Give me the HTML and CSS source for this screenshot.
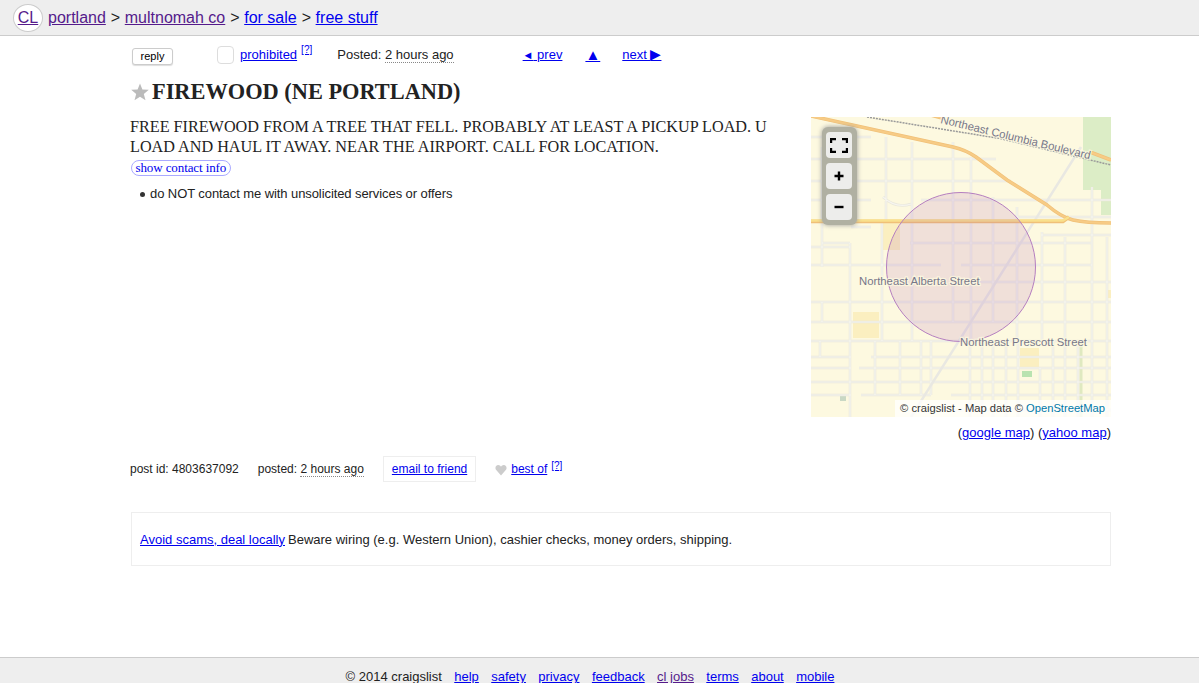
FILE: index.html
```html
<!DOCTYPE html>
<html lang="en">
<head>
<meta charset="utf-8">
<title>FIREWOOD (NE PORTLAND)</title>
<link rel="stylesheet" href="styles.css">
</head>
<body>
<header class="crumbs">
  <a class="cl-logo visited" href="#">CL</a>
  <a class="visited" href="#">portland</a><span class="sep">&gt;</span>
  <a class="visited" href="#">multnomah co</a><span class="sep">&gt;</span>
  <a href="#">for sale</a><span class="sep">&gt;</span>
  <a href="#">free stuff</a>
</header>
<main class="page">
  <div class="postingnav">
    <button class="reply" type="button">reply</button>
    <span class="flagbox"></span>
    <a class="prohibited" href="#">prohibited</a><sup class="help"><a href="#">[?]</a></sup>
    <span class="posted">Posted: <time class="ago">2 hours ago</time></span>
    <a class="nav-prev" href="#"><span class="tri-s">◄</span> prev</a>
    <a class="nav-up" href="#">▲</a>
    <a class="nav-next" href="#">next <span class="tri-l">▶</span></a>
  </div>
  <h1 class="title">
    <svg class="star" viewBox="0 0 18 18" width="18" height="18"><polygon points="9,0.5 11.4,6.4 17.8,6.8 12.8,10.9 14.5,17.2 9,13.7 3.5,17.2 5.2,10.9 0.2,6.8 6.6,6.4"/></svg>
    <span>FIREWOOD (NE PORTLAND)</span>
  </h1>
  <div class="posting">
    <section class="body">
      <p class="desc">FREE FIREWOOD FROM A TREE THAT FELL. PROBABLY AT LEAST A PICKUP LOAD. U LOAD AND HAUL IT AWAY. NEAR THE AIRPORT. CALL FOR LOCATION.</p>
      <a class="contact" href="#">show contact info</a>
      <ul class="notices"><li>do NOT contact me with unsolicited services or offers</li></ul>
    </section>
    <aside class="mapcol">
      <div class="map">
        <svg class="mapart" viewBox="0 0 300 300" width="300" height="300">
          <defs>
            <path id="streets" d="M0 20H60M0 42H185M0 64H200M0 83H60M72 80Q85 92 100 87M110 83H200M11 126H39M99 126H280M0 148H130M150 148H281M150 165H300M0 185H300M0 205H300M0 240H40M60 240H300M0 251H40M48 251H300M0 265H300M0 278H40M50 278H120M140 278H300M140 293H300M200 83H300M230 118H300M205 100H300M0 130H39M40 110H60M11 30V150M11 185V205M39 40V95M39 126V300M75 20V104M71 104V224M101 25V224M142 25V205M160 40V224M182 80V205M206 90V224M231 115V224M254 120V224M281 70V300M296 120V300M64 224V278M89 224V278M159 224V300M171 224V300M182 224V300M195 224V300M207 224V300M229 251V300M242 224V300M254 224V300M267 224V300M9 224V240M110 224V278M120 224V278M0 224H300"/>
          </defs>
          <rect class="land" width="300" height="300"/>
          <path class="park" d="M272 0H300V98H290V73H272Z"/>
          <path class="school" d="M71 106H89V133H71ZM42 195H68V221H42ZM209 231H228V251H209ZM296 173H300V181H296Z"/>
          <path class="green" d="M211 254H221V260H211Z"/>
          <path class="pale" d="M270 224V300"/>
          <path class="grey" d="M29 279H35V284H29Z"/>
          <use class="st-case" href="#streets"/>
          <use class="st-core" href="#streets"/>
          <path class="diag" d="M270 30L100 300"/>
          <path class="rail" d="M56 0L189 21.5L300 48"/>
          <path class="hw-edge" d="M0 -1L142 30Q155 33 165 40L196 63L236 88Q250 100 262 103Q275 106 300 106"/>
          <path class="hw" d="M0 -1L142 30Q155 33 165 40L196 63L236 88Q250 100 262 103Q275 106 300 106"/>
          <path class="hw-edge" d="M116 -3L131 1M279 35L300 43"/>
          <path class="hw" d="M116 -3L131 1M279 35L300 43"/>
          <path class="hw-edge" d="M0 104.5H252L258 100"/>
          <path class="hw-y" d="M0 103.5H252L258 100"/>
          <circle class="area" cx="150" cy="150" r="74.5"/>
          <text class="label" transform="translate(130 2) rotate(13.7)" y="4">Northeast Columbia Boulevard</text>
          <text class="label" x="48" y="168">Northeast Alberta Street</text>
          <text class="label" x="149" y="229">Northeast Prescott Street</text>
        </svg>
        <div class="mapctl">
          <button class="mapbtn" type="button" aria-label="fullscreen"><svg viewBox="0 0 18 15" width="18" height="15"><path d="M1 5V1H6M12 1H17V5M17 10V14H12M6 14H1V10"/></svg></button>
          <button class="mapbtn" type="button" aria-label="zoom in"><svg viewBox="0 0 10 10" width="10" height="10"><path d="M5 .5V9.5M.5 5H9.5"/></svg></button>
          <button class="mapbtn" type="button" aria-label="zoom out"><svg viewBox="0 0 10 10" width="10" height="10"><path d="M.5 5H9.5"/></svg></button>
        </div>
        <div class="attrib">© craigslist - Map data © <a href="#">OpenStreetMap</a></div>
      </div>
      <p class="maplinks">(<a href="#">google map</a>) (<a href="#">yahoo map</a>)</p>
    </aside>
  </div>
  <div class="postinfo">
    <span class="pid">post id: 4803637092</span>
    <span class="pdate">posted: <time class="ago">2 hours ago</time></span>
    <a class="email" href="#">email to friend</a>
    <svg class="heart" viewBox="0 0 12 12" width="12" height="12"><path d="M6 11.5L1 5.8C-0.3 3.8 0.8 1 3.2 1C4.5 1 5.5 1.8 6 2.8C6.5 1.8 7.5 1 8.8 1C11.2 1 12.3 3.8 11 5.8Z"/></svg>
    <a class="bestof" href="#">best of</a><sup class="help"><a href="#">[?]</a></sup>
  </div>
  <div class="scam"><a href="#">Avoid scams, deal locally</a> Beware wiring (e.g. Western Union), cashier checks, money orders, shipping.</div>
</main>
<footer class="foot">
  <span>© 2014 craigslist</span>
  <a href="#">help</a><a href="#">safety</a><a href="#">privacy</a><a href="#">feedback</a><a class="visited" href="#">cl jobs</a><a href="#">terms</a><a href="#">about</a><a href="#">mobile</a>
</footer>
</body>
</html>
```
FILE: styles.css
```css
html, body { margin: 0; padding: 0; }
body {
  height: 683px;
  overflow: hidden;
  display: flex;
  flex-direction: column;
  background: #fff;
  color: #222;
  font-family: "Liberation Sans", Arial, sans-serif;
  font-size: 13px;
}
a { color: #00e; }
a.visited { color: #551a8b; }

.crumbs {
  height: 35px;
  flex: none;
  display: flex;
  align-items: center;
  padding-left: 13px;
  background: #eee;
  border-bottom: 1px solid #ccc;
  font-size: 16px;
}
.cl-logo {
  width: 28px;
  height: 26px;
  margin-right: 5px;
  display: flex;
  align-items: center;
  justify-content: center;
  background: #fff;
  border: 1px solid #ccc;
  border-radius: 50%;
  font-size: 16px;
}
.sep { margin: 0 4.6px 0 5px; }

.page {
  flex: 1;
  padding: 0 88px 0 130px;
}
.postingnav {
  height: 36px;
  display: flex;
  align-items: center;
  box-sizing: border-box;
}
.reply {
  width: 41px;
  height: 17px;
  margin: 4px 0 0 2px;
  padding: 0;
  background: #fff;
  border: 1px solid #ccc;
  border-radius: 3px;
  box-shadow: 0 1px 1px #ddd;
  color: #000;
  font: 11px "Liberation Sans", Arial, sans-serif;
}
.flagbox {
  width: 15px;
  height: 16px;
  margin: 2px 0 0 44px;
  background: #fff;
  border: 1px solid #ddd;
  border-radius: 4px;
}
.prohibited { margin-left: 6px; }
.help { font-size: 10px; margin-left: 4px; align-self: flex-start; margin-top: 8px; line-height: 12px; }
.posted { margin-left: 25px; }
.ago { border-bottom: 1px dotted #888; }
.nav-prev { margin-left: 69px; }
.nav-up { margin-left: 23px; font-size: 15px; line-height: 15px; }
.nav-next { margin-left: 22px; }
.tri-s { font-size: 11px; }
.tri-l { font-size: 14px; line-height: 13px; }

.title {
  margin: 4px 0 0;
  height: 31px;
  display: flex;
  align-items: center;
  gap: 3px;
  font: bold 22.36px/31px "Liberation Serif", "Times New Roman", serif;
  color: #222;
}
.star { fill: #bbb; margin-left: 1px; }

.posting {
  margin-top: 10px;
  display: flex;
  gap: 30px;
}
.body { flex: 1; min-width: 0; }
.desc {
  margin: 0;
  font: 16.18px/20px "Liberation Serif", "Times New Roman", serif;
}
.contact {
  display: inline-block;
  margin: 3px 0 0 1px;
  padding: 0 3.5px;
  border: 1px solid #aaf;
  border-radius: 8px;
  font: 13px/14px "Liberation Serif", "Times New Roman", serif;
  letter-spacing: -.1px;
  text-decoration: none;
  color: #00e;
}
.notices {
  margin: 9px 0 0;
  padding: 0 0 0 9.5px;
  list-style: none;
  line-height: 17px;
  letter-spacing: -.08px;
}
.notices li { display: flex; align-items: center; gap: 5.5px; }
.notices li::before {
  content: "";
  width: 5px;
  height: 5px;
  margin-top: 1px;
  border-radius: 50%;
  background: #333;
}
.mapcol { width: 300px; flex: none; }
.map { position: relative; width: 300px; height: 300px; overflow: hidden; }
.mapart { display: block; }
.land { fill: #fdf9e0; }
.park { fill: #dcedc6; }
.school { fill: #fbefc0; }
.green { fill: #b9e3b0; }
.grey { fill: #c9d8c4; }
.pale { fill: none; stroke: #dfe9c0; stroke-width: 3; }
.st-case { fill: none; stroke: #e9e7db; stroke-width: 2.5; }
.st-core { fill: none; stroke: #f6f5ef; stroke-width: 1.2; }
.diag { fill: none; stroke: #e9e8e2; stroke-width: 2.5; }
.rail { fill: none; stroke: #999; stroke-width: 1.5; stroke-dasharray: 2 1; }
.hw-edge { fill: none; stroke: #f0c078; stroke-width: 3.6; }
.hw { fill: none; stroke: #f7cb85; stroke-width: 2.2; }
.hw-y { fill: none; stroke: #f9e08c; stroke-width: 2.5; }
.area { fill: #a04fb0; fill-opacity: .14; stroke: #b57fc0; stroke-width: 1; }
.label {
  fill: #77778a;
  font: 11.3px "Liberation Sans", Arial, sans-serif;
  stroke: #fdf9e0;
  stroke-width: 2.5;
  stroke-opacity: .8;
  paint-order: stroke;
}
.mapctl {
  position: absolute;
  left: 11px;
  top: 10px;
  width: 35px;
  height: 98px;
  box-sizing: border-box;
  padding: 5px 0 0 4px;
  display: flex;
  flex-direction: column;
  gap: 5px;
  background: #b0b0a2;
  border-radius: 6px;
  box-shadow: 0 0 5px #999;
}
.mapbtn {
  width: 26px;
  height: 26px;
  padding: 0;
  display: flex;
  align-items: center;
  justify-content: center;
  background: #ededeb;
  border: 0;
  border-radius: 4px;
}
.mapbtn svg { fill: none; stroke: #000; stroke-width: 2.4; }
.attrib {
  position: absolute;
  right: 0;
  bottom: 0;
  height: 17px;
  padding: 0 6px 0 5px;
  background: rgba(255,255,255,.75);
  color: #333;
  font-size: 11.2px;
  line-height: 17px;
}
.attrib a { color: #0078a8; text-decoration: none; }
.maplinks { margin: 7px 0 0; text-align: right; line-height: 17px; }

.postinfo {
  margin-top: 15px;
  height: 26px;
  display: flex;
  align-items: center;
  font-size: 12px;
}
.pdate { margin-left: 19px; }
.email {
  margin-left: 19px;
  height: 24px;
  padding: 0 8px;
  display: flex;
  align-items: center;
  border: 1px solid #eee;
}
.heart { fill: #ccc; margin: 2px 0 0 19px; }
.bestof { margin-left: 4px; }
.postinfo .help { margin-top: 4px; }

.scam {
  margin: 30px 0 0 1px;
  height: 52px;
  display: flex;
  align-items: center;
  gap: 3px;
  padding-left: 8px;
  border: 1px solid #eee;
}

.foot {
  height: 26px;
  flex: none;
  display: flex;
  justify-content: center;
  gap: 12.4px;
  padding: 11px 19px 0 0;
  box-sizing: border-box;
  background: #eee;
  border-top: 1px solid #ccc;
  line-height: 15px;
}
```
